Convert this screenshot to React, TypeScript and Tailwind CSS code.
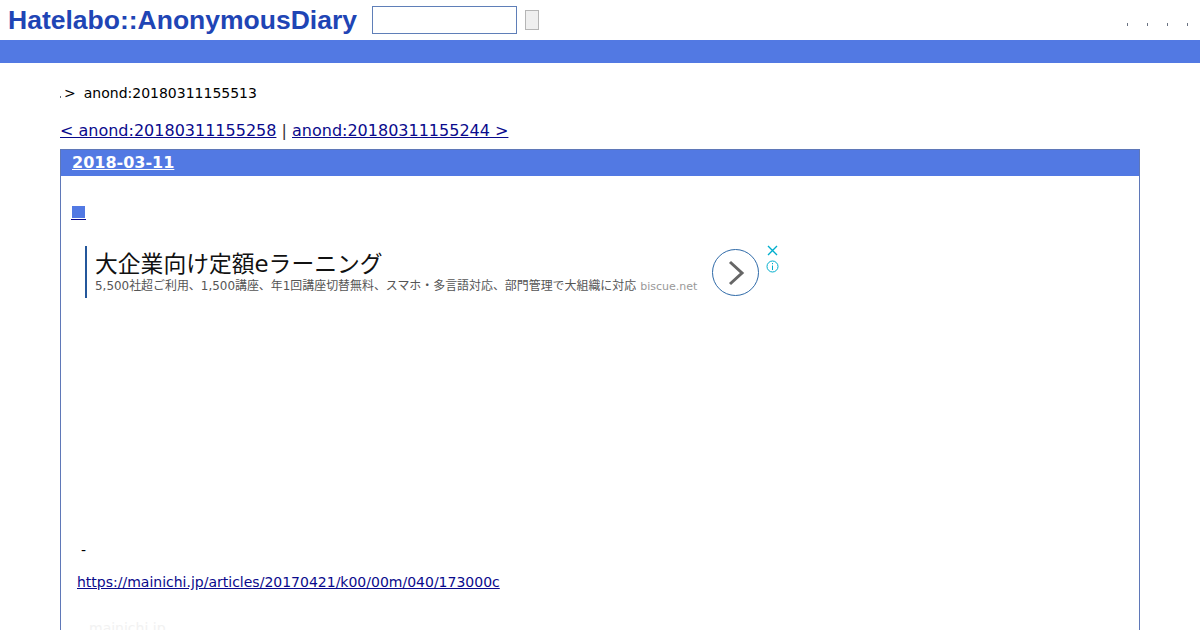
export default function App() {
  return (
    <div className="h-[630px] overflow-hidden bg-white font-['DejaVu_Sans','Noto_Sans_CJK_JP',sans-serif] text-black">
      {/* Header */}
      <header className="flex h-10 items-center">
        <a className="ml-2 w-[350px] font-['Liberation_Sans',sans-serif] text-[26.5px] leading-none font-bold whitespace-nowrap text-[#1f45b5]">
          Hatelabo::AnonymousDiary
        </a>
        <input className="ml-[14px] h-7 w-[145px] border border-[#5f7fb8] bg-white" />
        <button className="ml-2 h-5 w-[14px] border border-[#b5b5b5] bg-[#efefef]" />
        <div className="mt-2 mr-[12px] ml-auto flex gap-[19px]">
          <span className="h-[3px] w-px bg-gray-500" />
          <span className="h-[3px] w-px bg-gray-500" />
          <span className="h-[3px] w-px bg-gray-500" />
          <span className="h-[3px] w-px bg-gray-500" />
        </div>
      </header>
      <div className="h-[23px] bg-[#5279e3]" />

      <main className="px-[60px]">
        {/* Breadcrumb */}
        <div className="mt-[21px] flex h-[18px] items-center text-sm whitespace-nowrap">
          <span className="mt-[7px] h-[2px] w-px bg-gray-500" />
          <span className="ml-[3px]">&gt;</span>
          <span className="ml-[8px]">anond:20180311155513</span>
        </div>

        {/* Prev / next */}
        <div className="mt-[17px] h-[24px] text-base leading-[24px] whitespace-nowrap text-[#333]">
          <a className="text-[#0a0a8c] underline">&lt; anond:20180311155258</a>
          {' | '}
          <a className="text-[#0a0a8c] underline">anond:20180311155244 &gt;</a>
        </div>

        {/* Day section */}
        <section className="mt-[6px] h-[600px] border border-[#5f78b8]">
          <h2 className="flex h-[26px] items-center bg-[#5279e3] px-[11px] text-base font-bold text-white">
            <a className="underline">2018-03-11</a>
          </h2>

          <div className="pl-[10px]">
            <a className="mt-[29px] block w-fit border-b border-[#0a0a8c] px-[1px] pt-[1px] pb-[1px] leading-none">
              <span className="block h-[12px] w-[13px] bg-[#5279e3]" />
            </a>

            {/* Ad */}
            <div className="mt-[26px] ml-[14px] flex h-[52px] w-[710px] items-start">
              <div className="flex h-[52px] w-[640px] shrink-0 flex-col border-l-2 border-[#24579b] pl-[8px] whitespace-nowrap">
                <div className="mt-[3px] text-[22.8px] leading-[30px] text-[#111]">
                  大企業向け定額eラーニング
                </div>
                <div className="mt-[-1px] flex items-baseline text-[11.95px] leading-[16px] text-[#555]">
                  <span>5,500社超ご利用、1,500講座、年1回講座切替無料、スマホ・多言語対応、部門管理で大組織に対応</span>
                  <span className="ml-1 text-[11px] text-[#999]">biscue.net</span>
                </div>
              </div>
              <div className="mt-[3px] ml-[-13px] flex h-[47px] w-[47px] shrink-0 items-center justify-center rounded-full border border-[#2f6aa8]">
                <svg width="20" height="26" viewBox="0 0 20 26" fill="none" stroke="#666" strokeWidth="3">
                  <path d="M4 2 L16 13 L4 24" />
                </svg>
              </div>
              <div className="mt-[-2px] ml-[7px] flex flex-col items-center gap-[3px]">
                <svg width="13" height="13" viewBox="0 0 13 13" fill="none" stroke="#00aecd" strokeWidth="1.4">
                  <path d="M2 2 L11 11 M11 2 L2 11" />
                </svg>
                <svg width="13" height="13" viewBox="0 0 13 13" fill="none" stroke="#00aecd" strokeWidth="1">
                  <circle cx="6.5" cy="6.5" r="5.5" />
                  <path d="M6.5 5.5 V10 M6.5 3 V4.2" />
                </svg>
              </div>
            </div>

            {/* Body */}
            <p className="mt-[243px] ml-[10px] text-sm leading-[18px]">-</p>
            <p className="mt-[14px] ml-[6px] text-sm leading-[18px] whitespace-nowrap">
              <a className="text-[#0a0a8c] underline">https://mainichi.jp/articles/20170421/k00/00m/040/173000c</a>
            </p>
            <p className="mt-[30px] ml-[18px] text-sm leading-[14px] text-[#f2f2f2]">mainichi.jp</p>
          </div>
        </section>
      </main>
    </div>
  );
}
